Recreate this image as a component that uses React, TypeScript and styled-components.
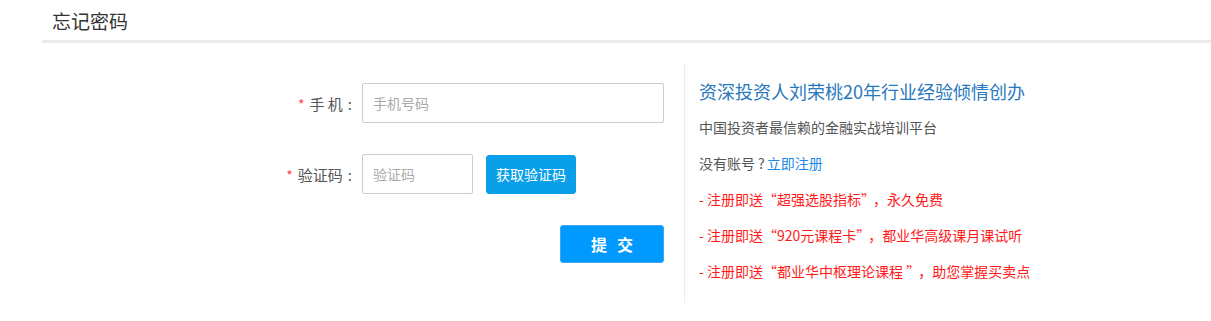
import styled, { createGlobalStyle } from 'styled-components';

const GlobalStyle = createGlobalStyle`
  html, body {
    margin: 0;
    padding: 0;
    background: #fff;
  }
  body {
    font-family: "Noto Sans CJK SC", "Liberation Sans", sans-serif;
    color: #333;
  }
`

const Page = styled.div`
  margin-left: 42px;
`

const Header = styled.div`
  height: 40px;
  padding-left: 10px;
  border-bottom: 3px solid #ebebeb;
  display: flex;
  align-items: center;
  font-size: 19px;
  color: #333;
`

const Body = styled.div`
  display: flex;
  padding-top: 20px;
`

const FormColumn = styled.div`
  width: 642px;
  display: flex;
  justify-content: flex-end;
  padding: 20px 20px 0 0;
  box-sizing: border-box;
`

const Form = styled.form`
  display: grid;
  grid-template-columns: 90px 302px;
  column-gap: 10px;
  row-gap: 31px;
  align-items: center;
  align-content: start;
`

const Label = styled.label`
  text-align: right;
  font-size: 15px;
  color: #555;
  white-space: pre;
`

const Star = styled.span`
  color: #f44;
  margin-right: 5px;
  font-size: 14px;
`

const Colon = styled.span`
  margin-left: 5px;
`

const Input = styled.input<{ $width?: number }>`
  width: ${p => p.$width ?? 302}px;
  height: 40px;
  box-sizing: border-box;
  border: 1px solid #ccc;
  border-radius: 2px;
  padding: 0 10px;
  font-size: 14px;
  font-family: inherit;
  color: #333;
  outline: none;

  &::placeholder {
    color: #aaa;
  }
`

const CodeRow = styled.div`
  display: flex;
  align-items: center;
  gap: 13px;
`

const Button = styled.button<{ $primary?: boolean }>`
  font-family: inherit;
  color: #fff;
  cursor: pointer;
  border-radius: 3px;
  box-sizing: border-box;
  border: 1px solid ${p => (p.$primary ? '#3aa8f5' : '#0aa0e9')};
  background: ${p => (p.$primary ? '#0099ff' : '#0aa0e9')};
  font-size: ${p => (p.$primary ? '16px' : '14px')};
  font-weight: ${p => (p.$primary ? 'bold' : 'normal')};
  letter-spacing: ${p => (p.$primary ? '10px' : '0')};
  padding: 0;
`

const CodeButton = styled(Button)`
  width: 90px;
  height: 39px;
`

const SubmitCell = styled.div`
  grid-column: 2;
  display: flex;
  justify-content: flex-end;
`

const SubmitButton = styled(Button)`
  width: 104px;
  height: 38px;
  padding-left: 10px;
`

const InfoColumn = styled.div`
  border-left: 1px solid #ececec;
  height: 240px;
  box-sizing: border-box;
  padding: 10px 0 0 14px;
`

const InfoLine = styled.div<{ $tone?: 'title' | 'red' }>`
  height: 36px;
  line-height: 36px;
  font-size: ${p => (p.$tone === 'title' ? '18px' : '14px')};
  color: ${p => (p.$tone === 'title' ? '#2a78bd' : p.$tone === 'red' ? '#ff1a1a' : '#555')};
  white-space: pre;
`

// the original font leaves a wider gap after the closing quote
const CloseQuote = styled.span`
  margin-right: 5px;
`

const Question = styled.span`
  margin: 0 2px 0 3px;
`

const Link = styled.a`
  color: #1a8ae6;
  text-decoration: none;
`

const perks: [string, string, string][] = [
  ['注册即送', '超强选股指标', '，永久免费'],
  ['注册即送', '920元课程卡', '，都业华高级课月课试听'],
  ['注册即送', '都业华中枢理论课程 ', '，助您掌握买卖点'],
]

export default function App() {
  return (
    <>
      <GlobalStyle />
      <Page lang="zh-CN">
        <Header>忘记密码</Header>
        <Body>
          <FormColumn>
            <Form onSubmit={e => e.preventDefault()}>
              <Label><Star>*</Star>手 机<Colon>:</Colon></Label>
              <Input placeholder="手机号码" />
              <Label><Star>*</Star>验证码<Colon>:</Colon></Label>
              <CodeRow>
                <Input $width={111} placeholder="验证码" />
                <CodeButton type="button">获取验证码</CodeButton>
              </CodeRow>
              <SubmitCell>
                <SubmitButton $primary type="submit">提交</SubmitButton>
              </SubmitCell>
            </Form>
          </FormColumn>
          <InfoColumn>
            <InfoLine $tone="title">资深投资人刘荣桃20年行业经验倾情创办</InfoLine>
            <InfoLine>中国投资者最信赖的金融实战培训平台</InfoLine>
            <InfoLine>没有账号<Question>?</Question><Link href="#">立即注册</Link></InfoLine>
            {perks.map(([lead, gift, tail]) => (
              <InfoLine key={gift} $tone="red">
                - {lead}“{gift}<CloseQuote>”</CloseQuote>{tail}
              </InfoLine>
            ))}
          </InfoColumn>
        </Body>
      </Page>
    </>
  )
}
